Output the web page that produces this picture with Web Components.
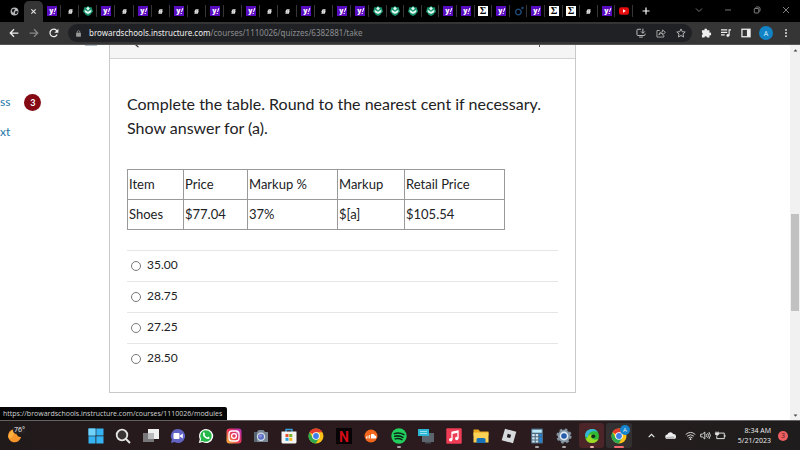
<!DOCTYPE html>
<html lang="en">
<head>
<meta charset="utf-8">
<title>Quiz</title>
<style>
  html, body {
    height: 100%;
    margin: 0;
  }
  body {
    font-family: "Open Sans", "Noto Sans", sans-serif;
    overflow: hidden;
  }
</style>
</head>
<body>
<browser-window>
  <tab-strip slot="tabs"></tab-strip>
  <address-bar slot="toolbar" host="browardschools.instructure.com" path="/courses/1110026/quizzes/6382881/take"></address-bar>
  <course-nav slot="nav"></course-nav>
  <quiz-question slot="content">
    <span slot="prompt">Complete the table. Round to the nearest cent if necessary. Show answer for (a).</span>
    <price-table slot="table"></price-table>
    <answer-option slot="answers" value="35.00"></answer-option>
    <answer-option slot="answers" value="28.75"></answer-option>
    <answer-option slot="answers" value="27.25"></answer-option>
    <answer-option slot="answers" value="28.50"></answer-option>
  </quiz-question>
  <span slot="status">https://browardschools.instructure.com/courses/1110026/modules</span>
  <task-bar slot="taskbar"></task-bar>
</browser-window>

<script>
const chrome = `
  <circle cx="8" cy="8" r="7.5" fill="#fbc116"/>
  <path d="M8 8 1.5 4.2A7.5 7.5 0 0 1 14.5 4.2H8z" fill="#e33b2e"/>
  <path d="M1.5 4.2A7.5 7.5 0 0 0 7.6 15.5L11.3 9.9 8 8 4.7 9.9z" fill="#2da94f"/>
  <circle cx="8" cy="8" r="3.8" fill="#fff"/>
  <circle cx="8" cy="8" r="2.9" fill="#3f7de8"/>`;

// every icon is drawn on a 16 x 16 grid
const icons = {
  globe: `<circle cx="8" cy="8" r="7" fill="#b5b8bb"/><path d="M3 5l4-2 2 2-2 2-1 3-2-1zM9 8l4-1 1 2-3 4-2-1z" fill="#111"/>`,
  close: `<path d="M3 3l10 10M13 3L3 13" stroke="currentColor" stroke-width="2.4"/>`,
  yahoo: `<rect width="16" height="16" fill="#5a0cc0"/><text x="7" y="11" fill="#fff" font-family="Open Sans, sans-serif" font-size="11" font-weight="800" text-anchor="middle">y</text><path d="M11.2 9.5l1.8-6h2l-2.2 6zM10.5 11h2v1.6h-2z" fill="#fff"/>`,
  mark: `<path d="M6 3h7l-1 4h1l-2 6H3l1-4H3l1-3z" fill="#e0e0e0"/><path d="M7.500 6h2M6.500 9.500h2" stroke="#444" stroke-width="1"/>`,
  leaf: `<path d="M8 0l3 2h3l1 4 1 3-3 3-1 2-4 2-4-2-1-2-3-3 1-3 1-4h3z" fill="#15916e"/><path d="M8 1l3 3-3 3-3-3zM2.500 6L7 8.500l1 1 1-1L13.500 6l-.5 4-4 2.500H7L3 10z" fill="#e2f8ef"/>`,
  sigma: `<rect width="16" height="16" fill="#fff"/><text x="8" y="13.500" fill="#000" font-family="Liberation Serif, serif" font-size="16" font-weight="700" text-anchor="middle">Σ</text>`,
  ring: `<circle cx="7" cy="9.500" r="4.500" fill="none" stroke="#1d4673" stroke-width="2.400"/><circle cx="13.500" cy="3" r="2" fill="#1d4673"/>`,
  youtube: `<rect y="2" width="16" height="12" rx="3.500" fill="#e60c0c"/><path d="M6.500 5.200L11 8l-4.500 2.800z" fill="#fff"/>`,
  plus: `<path d="M8 1v14M1 8h14" stroke="currentColor" stroke-width="2.400"/>`,
  down: `<path d="M2 5l6 6 6-6" fill="none" stroke="currentColor" stroke-width="1.400"/>`,
  up: `<path d="M3 11l5-5 5 5" fill="none" stroke="currentColor" stroke-width="2"/>`,
  minimize: `<path d="M2 8h12" stroke="currentColor" stroke-width="1.400"/>`,
  restore: `<rect x="2.500" y="5" width="9" height="9" rx="1.500" fill="none" stroke="currentColor" stroke-width="1.500"/><path d="M5 3q1-1 2-1h4q3 0 3 3v4q0 1-1 2" fill="none" stroke="currentColor" stroke-width="1.500"/>`,
  exit: `<path d="M2 2l12 12M14 2L2 14" stroke="currentColor" stroke-width="1.500"/>`,
  back: `<path d="M15 8H2M8 2L2 8l6 6" fill="none" stroke="currentColor" stroke-width="2"/>`,
  forward: `<path d="M1 8h13M8 2l6 6-6 6" fill="none" stroke="currentColor" stroke-width="2"/>`,
  reload: `<path d="M13 10.500A6 6 0 1 1 12 3.800L14 6" fill="none" stroke="currentColor" stroke-width="2"/><path d="M15 1v6.500H8.500z" fill="currentColor"/>`,
  lock: `<rect x="2.500" y="6.500" width="11" height="9" rx="1" fill="currentColor"/><path d="M5 7V4.500a3 3 0 0 1 6 0V7" fill="none" stroke="currentColor" stroke-width="1.700"/>`,
  install: `<path d="M8 2H3Q1.500 2 1.500 3.500v7Q1.500 12 3 12h10q1.500 0 1.500-1.500V9M5 14.500h6M11 1v7M8 5.500l3 3 3-3" fill="none" stroke="currentColor" stroke-width="1.600"/>`,
  share: `<path d="M6 4H1.500v10.500h11V11M4.500 11q.5-5 6-5V3L15 7l-4.500 4V8.500q-4 0-6 2.500z" fill="none" stroke="currentColor" stroke-width="1.300"/>`,
  star: `<path d="M8 1.500l2 4.400 4.700.5-3.500 3.200 1 4.800L8 12l-4.200 2.400 1-4.800L1.300 6.400 6 5.900z" fill="none" stroke="currentColor" stroke-width="1.500"/>`,
  puzzle: `<path d="M1.500 3.500h4a2.200 2.200 0 1 1 4.200 0h3.800v4a2.200 2.200 0 1 1 0 4.200V15h-4a2 2 0 0 0-4 0h-4v-4a2.200 2.200 0 0 0 0-4z" fill="currentColor"/>`,
  queue: `<path d="M0 3h10M0 7h10M0 11h6M13 12V3h3" fill="none" stroke="currentColor" stroke-width="1.800"/><circle cx="11" cy="12" r="2.300" fill="currentColor"/>`,
  panel: `<rect x="1.500" y="2" width="13" height="12" fill="none" stroke="currentColor" stroke-width="2"/><path d="M9.500 2h5v12h-5z" fill="currentColor"/>`,
  more: `<circle cx="8" cy="3" r="1.500" fill="currentColor"/><circle cx="8" cy="8" r="1.500" fill="currentColor"/><circle cx="8" cy="13" r="1.500" fill="currentColor"/>`,
  arrowUp: `<path d="M2 11l6-7 6 7z" fill="currentColor"/>`,
  arrowDown: `<path d="M2 5l6 7 6-7z" fill="currentColor"/>`,
  windows: `<path d="M.5.500h7v7h-7zM8.300.500h7.200v7H8.300zM.5 8.300h7v7.200h-7zM8.300 8.300h7.200v7.200H8.300z" fill="#35b3f2"/><path d="M.5.500h7v7h-7z" fill="#72d3fa"/>`,
  search: `<circle cx="7" cy="7" r="5.300" fill="#3b3435" stroke="#e5e5e5" stroke-width="1.800"/><path d="M11 11l4 4" stroke="#e5e5e5" stroke-width="2"/>`,
  taskview: `<rect x="5" y="1" width="11" height="10" fill="#f0f0f0"/><rect x="0" y="5" width="11" height="9" fill="#77777a"/><rect x="5" y="5" width="6" height="6" fill="#b9b9bb"/>`,
  chat: `<path d="M8 1a7 7 0 1 1-3.500 13L1 15l.8-3.500A7 7 0 0 1 8 1z" fill="#6264c4"/><rect x="3.500" y="5" width="6" height="6" rx="1" fill="#fff"/><path d="M10 7.500l2.800-2v5L10 8.500z" fill="#fff"/>`,
  whatsapp: `<path d="M8 1a7 7 0 1 1-3.400 13L.8 15l1-3.800A7 7 0 0 1 8 1z" fill="#fff"/><path d="M8 2.200a5.800 5.800 0 1 1-3.200 10.700l-2.400.7.700-2.400A5.800 5.800 0 0 1 8 2.200z" fill="#26b94a"/><path d="M5 5q1-1.500 1.800.3.500 1-.3 1.500 1 2 2.800 2.600.7-1.200 1.600-.5 1.500.8.300 1.800-1.400 1-4-.7Q4.300 7.500 5 5z" fill="#fff"/>`,
  instagram: `<defs><linearGradient id="g" x1="0" y1="1" x2="1" y2="0"><stop stop-color="#fdc13c"/><stop offset=".5" stop-color="#ea3458"/><stop offset="1" stop-color="#b52bc0"/></linearGradient></defs><rect x=".5" y=".5" width="15" height="15" rx="3" fill="url(#g)"/><rect x="3" y="3" width="10" height="10" rx="3" fill="none" stroke="#fff" stroke-width="1.300"/><circle cx="8" cy="8" r="2.400" fill="none" stroke="#fff" stroke-width="1.300"/><circle cx="11" cy="5" r=".7" fill="#fff"/>`,
  camera: `<path d="M1 4h3l1.500-2h5L12 4h3v10H1z" fill="#7b8794"/><path d="M1 4h3v10H1z" fill="#586673"/><circle cx="8" cy="8.700" r="4.200" fill="#d9dfe8"/><circle cx="8" cy="8.700" r="3" fill="#5873c4"/><circle cx="7.500" cy="8" r="1.400" fill="#9c8ce0"/>`,
  store: `<path d="M5 4V1.500h6V4" fill="none" stroke="#38a5df" stroke-width="1.300"/><path d="M.5 3.500h15V14q0 1.500-1.500 1.500H2Q.5 15.500.5 14z" fill="#f4f4f4"/><path d="M4.500 6h3v3h-3z" fill="#e8532e"/><path d="M8.300 6h3v3h-3z" fill="#75b62b"/><path d="M4.500 9.800h3v3h-3z" fill="#29a0df"/><path d="M8.300 9.800h3v3h-3z" fill="#f5b51b"/>`,
  chrome,
  netflix: `<rect width="16" height="16" fill="#050303"/><text x="8" y="13.500" fill="#d40d17" font-family="Roboto, sans-serif" font-size="14" font-weight="700" text-anchor="middle">N</text>`,
  soundcloud: `<circle cx="8" cy="8" r="6.500" fill="#f2661c"/><path d="M8 10.500V6.300q3-1.600 3.800 1.200 1.700 0 1.600 1.500 0 1.500-1.500 1.500z" fill="#fff"/><path d="M3.500 8.500v2M5 7.500v3M6.600 7v3.500" stroke="#fff" stroke-width=".9"/>`,
  spotify: `<circle cx="8" cy="8" r="7.700" fill="#22cf5e"/><path d="M3.300 5.600q5-1.400 9.600 1M3.700 8.300q4.300-1.200 8.300 1M4.200 10.900q3.500-1 6.800.8" fill="none" stroke="#0b2414" stroke-width="1.500" stroke-linecap="round"/>`,
  remote: `<rect x="4" y="5" width="12" height="9" fill="#5c646e"/><path d="M7 14h6v1.500H7z" fill="#454b53"/><rect x="0" y="1" width="11" height="7" fill="#2db6d3"/><path d="M2 3.500h7M2 5.500h7" stroke="#b4edf7" stroke-width=".8"/>`,
  music: `<rect x=".3" y=".3" width="15.400" height="15.400" rx="1" fill="#ef3d56"/><path d="M6 11.500V4.200L12 3v7.200" fill="none" stroke="#fff" stroke-width="1.300"/><path d="M6 4l6-1.200v2L6 6z" fill="#fff"/><circle cx="4.700" cy="11.700" r="1.700" fill="#fff"/><circle cx="10.700" cy="10.500" r="1.700" fill="#fff"/>`,
  folder: `<path d="M.5 1.500h5l1.500 2h8.500v4H.5z" fill="#e9a71d"/><path d="M.5 4.500h15v10H.5z" fill="#fbd255"/><path d="M3.500 15v-3.500q0-1.500 1.500-1.500h6q1.500 0 1.500 1.500V15z" fill="#1771b8"/>`,
  roblox: `<path d="M4 .8l11.300 3L12 15.200l-11.300-3z" fill="#d7dadd"/><path d="M6.700 5.800l3.400.9-.9 3.400-3.400-.9z" fill="#1e1a1b"/>`,
  calculator: `<rect x="2" y=".5" width="12" height="15" rx="1" fill="#4a6880"/><rect x="3.200" y="1.700" width="9.600" height="3" fill="#bfe8f8"/><path d="M3.200 6h2.500v2.300H3.200zM6.700 6h2.500v2.300H6.700zM3.200 9.300h2.500v2.300H3.200zM6.700 9.300h2.500v2.300H6.700zM3.200 12.500h2.500v2H3.200zM6.700 12.500h2.500v2H6.700z" fill="#d5e3ee"/><path d="M10.300 6h2.500v2.300h-2.500zM10.300 9.300h2.500v5.200h-2.500z" fill="#2284d8"/>`,
  gear: `<circle cx="8" cy="8" r="6.300" fill="#8494a3" stroke="#8494a3" stroke-width="2.600" stroke-dasharray="2.500 2.450"/><circle cx="8" cy="8" r="4.400" fill="#e3ebf2"/><circle cx="8" cy="8" r="2.800" fill="#245caa"/>`,
  edge: `<circle cx="8" cy="8" r="7" fill="#31b936"/><path d="M1 8a7 7 0 0 1 13-3.500Q10 1.500 6 4.500 3.500 7 4 10z" fill="#36b5dc"/><path d="M2 11q1 4 6 4 4.500 0 6.500-4.300-4 2-6.500-.2Q6 8.500 9 6.800 4.500 5.500 3.500 9.500z" fill="#9ddb25"/><path d="M7.200 8.500q0-2 2-2t2.300 2q-1 1.700-2.500 1.600t-1.800-1.600z" fill="#142b1a"/>`,
  cloud: `<path d="M3.500 13a3.200 3.200 0 0 1 0-6.400A4.500 4.500 0 0 1 12 6a3.500 3.500 0 0 1 1 7z" fill="#eee"/><path d="M3 13q-2-1-1-3l11-1q2 2 .5 4z" fill="#bdbdbf"/>`,
  wifi: `<path d="M1 6.500q7-6 14 0M3 9q5-4.200 10 0M5.200 11.400q2.800-2.300 5.600 0" fill="none" stroke="#e5e5e5" stroke-width="1.300"/><circle cx="8" cy="13.300" r="1.300" fill="#e5e5e5"/>`,
  sound: `<path d="M1 6h2.500L7 3v10L3.500 10H1zM9 6q1.600 2 0 4M11 4.500q3 3.500 0 7M13 3q4.300 5 0 10" fill="none" stroke="#e5e5e5" stroke-width="1.300"/>`,
  battery: `<path d="M5 4.500h8.500v8h-11V9M14.500 7v3" fill="none" stroke="#e5e5e5" stroke-width="1.400"/><path d="M1.500 2v2M4.500 2v2M.5 4h5v2.500L3 8 .5 6.500z" fill="#e5e5e5" stroke="#e5e5e5"/>`,
  moon: `<path d="M10 1.500A7 7 0 1 0 15 9.500Q9 10 10 1.500z" fill="#f7942a"/><path d="M8 2.500A6.500 6.500 0 0 0 2 11Q7 12 8 2.500z" fill="#fbb040"/>`
};

class UiIcon extends HTMLElement {
  constructor() {
    super();
    this.attachShadow({ mode: "open" });
  }

  connectedCallback() {
    this.shadowRoot.innerHTML = `
      <style>
        :host { display: block; flex: none; width: var(--icon-size, 16px); height: var(--icon-size, 16px); }
        svg { display: block; width: 100%; height: 100%; overflow: visible; }
      </style>
      <svg viewBox="0 0 16 16" aria-hidden="true">${icons[this.getAttribute("name")]}</svg>
    `;
  }
}

class BrowserWindow extends HTMLElement {
  constructor() {
    super();
    this.attachShadow({ mode: "open" });
    this.shadowRoot.innerHTML = `
      <style>
        :host {
          display: flex;
          flex-direction: column;
          height: 100vh;
          background: #fff;
        }
        .view {
          position: relative;
          flex: 1;
          min-height: 0;
          display: grid;
          grid-template-columns: 109px minmax(0, 467fr) 214fr 10px;
          overflow: hidden;
        }
        scroll-track { grid-column: 4; }
        .status {
          position: absolute;
          left: 0;
          bottom: 0;
          padding: 0 5px 0 3px;
          border-radius: 0 2px 0 0;
          background: #050505;
          color: #d2d2d2;
          font-size: 7px;
          line-height: 13px;
        }
      </style>
      <slot name="tabs"></slot>
      <slot name="toolbar"></slot>
      <div class="view">
        <slot name="nav"></slot>
        <slot name="content"></slot>
        <scroll-track></scroll-track>
        <div class="status"><slot name="status"></slot></div>
      </div>
      <slot name="taskbar"></slot>
    `;
  }
}

class ScrollTrack extends HTMLElement {
  constructor() {
    super();
    this.attachShadow({ mode: "open" });
    this.shadowRoot.innerHTML = `
      <style>
        :host {
          --icon-size: 5px;
          display: grid;
          grid-template-rows: 10px 159fr 97fr 99fr 10px;
          justify-items: center;
          align-items: center;
          background: #f1f1f1;
          color: #444;
        }
        .thumb { grid-row: 3; width: 8px; height: 100%; background: #c1c1c1; }
        .end { grid-row: 5; }
      </style>
      <ui-icon name="arrowUp"></ui-icon>
      <div class="thumb"></div>
      <ui-icon class="end" name="arrowDown"></ui-icon>
    `;
  }
}

class TabStrip extends HTMLElement {
  constructor() {
    super();
    this.attachShadow({ mode: "open" });
    const y = "yahoo", m = "mark", l = "leaf", s = "sigma";
    const groups = [
      ["globe", "close"],
      [y, m, l, y, m, y, m, y, m, y, m, y, m, m, y, m, y, y],
      [l, l, l, l, y, y, s, y, "ring", y, s, s, m, y, "youtube"]
    ];
    const tab = name => `<button class="tab ${name}" role="tab" aria-label="${name}"><ui-icon name="${name}"></ui-icon></button>`;
    this.shadowRoot.innerHTML = `
      <style>
        :host {
          --icon-size: 10px;
          display: flex;
          height: 22px;
          padding-left: 5px;
          background: #000;
          color: #e8e8e8;
        }
        .group { display: flex; flex: 38 1 0; min-width: 0; }
        .group:nth-of-type(2) { flex-grow: 326; }
        .group:nth-of-type(3) { flex-grow: 264; }
        button {
          display: flex;
          align-items: center;
          justify-content: center;
          padding: 0;
          border: 0;
          background: none;
          color: inherit;
        }
        .tab {
          flex: 1 1 0;
          min-width: 0;
          background: linear-gradient(#363636, #363636) right center / 1px 12px no-repeat;
        }
        .globe { --icon-size: 9px; background: none; }
        .mark { --icon-size: 7px; }
        .close {
          --icon-size: 7px;
          margin-top: 1px;
          padding-bottom: 1px;
          border-radius: 5px 5px 0 0;
          background: #353535;
        }
        .controls {
          flex: 167 1 0;
          display: grid;
          grid-template-columns: 26fr 26fr repeat(4, 29fr);
          --icon-size: 8px;
          color: #aaa;
        }
        .new { color: #fff; }
        .caption { padding-bottom: 3px; }
      </style>
      ${groups.map(g => `<div class="group">${g.map(tab).join("")}</div>`).join("")}
      <div class="controls">
        <button class="new" aria-label="New tab"><ui-icon name="plus"></ui-icon></button>
        <span></span>
        <button class="caption" aria-label="Search tabs"><ui-icon name="down"></ui-icon></button>
        <button class="caption" aria-label="Minimize"><ui-icon name="minimize"></ui-icon></button>
        <button class="caption" aria-label="Restore"><ui-icon name="restore"></ui-icon></button>
        <button class="caption" aria-label="Close"><ui-icon name="exit"></ui-icon></button>
      </div>
    `;
  }
}

class AddressBar extends HTMLElement {
  constructor() {
    super();
    this.attachShadow({ mode: "open" });
  }

  connectedCallback() {
    this.shadowRoot.innerHTML = `
      <style>
        :host {
          --icon-size: 10px;
          display: flex;
          align-items: center;
          height: 22px;
          border-bottom: 1px solid #555;
          background: #353535;
          color: #eee;
        }
        button {
          display: flex;
          align-items: center;
          justify-content: center;
          width: 20px;
          height: 18px;
          padding: 0;
          border: 0;
          background: none;
          color: inherit;
        }
        .nav { display: flex; padding: 0 4px; }
        .dim { color: #888; }
        .omnibox {
          flex: 1;
          display: flex;
          align-items: center;
          height: 18px;
          padding: 0 1px 0 7px;
          border-radius: 9px;
          background: #202124;
          color: #bbb;
        }
        .lock { --icon-size: 7px; color: #999; }
        .url {
          flex: 1;
          margin-left: 7px;
          color: #8c8e91;
          font-family: "Noto Sans", sans-serif;
          font-size: 8px;
          line-height: 16px;
          white-space: nowrap;
        }
        .url span { color: #eee; }
        .tools { display: flex; align-items: center; padding: 0 4px; }
        .avatar {
          width: 14px;
          height: 14px;
          margin: 0 3px;
          border-radius: 50%;
          background: #1283c5;
          color: #d9efff;
          font: 7px "Open Sans", sans-serif;
        }
      </style>
      <div class="nav">
        <button aria-label="Back"><ui-icon name="back"></ui-icon></button>
        <button class="dim" aria-label="Forward"><ui-icon name="forward"></ui-icon></button>
        <button aria-label="Reload"><ui-icon name="reload"></ui-icon></button>
      </div>
      <div class="omnibox">
        <ui-icon class="lock" name="lock"></ui-icon>
        <div class="url" role="textbox" contenteditable="true" spellcheck="false" aria-label="Address"><span>${this.getAttribute("host")}</span>${this.getAttribute("path")}</div>
        <button aria-label="Install"><ui-icon name="install"></ui-icon></button>
        <button aria-label="Share"><ui-icon name="share"></ui-icon></button>
        <button aria-label="Bookmark"><ui-icon name="star"></ui-icon></button>
      </div>
      <div class="tools">
        <button aria-label="Extensions"><ui-icon name="puzzle"></ui-icon></button>
        <button aria-label="Media"><ui-icon name="queue"></ui-icon></button>
        <button aria-label="Side panel"><ui-icon name="panel"></ui-icon></button>
        <button class="avatar" aria-label="Profile A">A</button>
        <button aria-label="Menu"><ui-icon name="more"></ui-icon></button>
      </div>
    `;
  }
}

class CourseNav extends HTMLElement {
  constructor() {
    super();
    this.attachShadow({ mode: "open" });
    this.shadowRoot.innerHTML = `
      <style>
        :host {
          display: block;
          font-family: Lato, sans-serif;
          font-size: 12px;
          line-height: 18px;
        }
        .edge { width: 12px; height: 1px; margin-left: 85px; background: #b4c0ca; }
        nav { display: grid; gap: 12px; padding-top: 47px; }
        a {
          display: flex;
          align-items: center;
          gap: 14px;
          color: #2276a8;
          text-decoration: none;
        }
        .badge {
          width: 17px;
          height: 17px;
          border-radius: 50%;
          background: #850a14;
          color: #fff;
          font-size: 9px;
          font-weight: 700;
          line-height: 17px;
          text-align: center;
        }
      </style>
      <div class="edge"></div>
      <nav>
        <a href="#ss">ss <span class="badge">3</span></a>
        <a href="#xt">xt</a>
      </nav>
    `;
  }
}

class QuizQuestion extends HTMLElement {
  constructor() {
    super();
    this.attachShadow({ mode: "open" });
    this.shadowRoot.innerHTML = `
      <style>
        :host {
          display: block;
          align-self: start;
          border: 1px solid #c7c9cb;
          border-top: 0;
          color: #222224;
          font-family: Lato, sans-serif;
        }
        header {
          display: flex;
          justify-content: space-between;
          height: 13px;
          padding: 0 32px 0 25px;
          border-bottom: 1px solid #d0d2d4;
          background: #f5f5f5;
        }
        header svg { width: 4px; height: 3px; }
        .body { padding: 33px 17px 18px; }
        p { margin: 0 0 29px; font-size: 16px; line-height: 24px; }
        fieldset {
          display: grid;
          margin: 20px 0 0;
          padding: 0;
          border: 0;
        }
      </style>
      <header>
        <svg viewBox="0 0 4 3" aria-hidden="true"><path d="M0 0h2l2 2-1 .6z" fill="#333"/></svg>
        <svg viewBox="0 0 4 3" aria-hidden="true"><path d="M0 0h1v2H0z" fill="#555"/></svg>
      </header>
      <div class="body">
        <p><slot name="prompt"></slot></p>
        <slot name="table"></slot>
        <fieldset aria-label="Answers"><slot name="answers"></slot></fieldset>
      </div>
    `;
    this.addEventListener("answer-change", (event) => {
      this.querySelectorAll("answer-option").forEach((option) => {
        if (option !== event.target) option.clear();
      });
    });
  }
}

class PriceTable extends HTMLElement {
  constructor() {
    super();
    this.attachShadow({ mode: "open" });
    this.shadowRoot.innerHTML = `
      <style>
        :host { display: block; }
        table {
          border-collapse: collapse;
          font-size: 13px;
          line-height: 18px;
        }
        th, td {
          padding: 5px 1px 6px;
          border: 1px solid #999;
          font-weight: 400;
          text-align: left;
          white-space: nowrap;
        }
      </style>
      <table>
        <colgroup>
          <col style="width: 56px"><col style="width: 64px"><col style="width: 90px"><col style="width: 67px"><col style="width: 100px">
        </colgroup>
        <thead>
          <tr><th>Item</th><th>Price</th><th>Markup %</th><th>Markup</th><th>Retail Price</th></tr>
        </thead>
        <tbody>
          <tr><td>Shoes</td><td>$77.04</td><td>37%</td><td>$[a]</td><td>$105.54</td></tr>
        </tbody>
      </table>
    `;
  }
}

class AnswerOption extends HTMLElement {
  constructor() {
    super();
    this.attachShadow({ mode: "open" });
  }

  connectedCallback() {
    const value = this.getAttribute("value");
    this.shadowRoot.innerHTML = `
      <style>
        :host { display: block; border-top: 1px solid #e6e6e6; }
        label {
          display: flex;
          align-items: center;
          gap: 6px;
          padding: 5px 4px 7px;
          font-size: 12px;
          line-height: 18px;
        }
        input {
          appearance: none;
          width: 10px;
          height: 10px;
          margin: 1px 0 0;
          border: 1px solid #777;
          border-radius: 50%;
          background: #fff;
        }
        input:checked { background: #2276a8; box-shadow: inset 0 0 0 2px #fff; }
      </style>
      <label><input type="radio" name="answer" value="${value}">${value}</label>
    `;
    this.input = this.shadowRoot.querySelector("input");
    this.input.addEventListener("change", () => {
      this.dispatchEvent(new CustomEvent("answer-change", { bubbles: true }));
    });
  }

  clear() {
    this.input.checked = false;
  }
}

class TaskBar extends HTMLElement {
  constructor() {
    super();
    this.attachShadow({ mode: "open" });
    const apps = ["windows", "search", "taskview", "chat", "whatsapp", "instagram", "camera", "store", "chrome", "netflix",
      "soundcloud", "spotify", "remote", "music", "folder", "roblox", "calculator", "gear", "edge", "chrome"];
    const running = { 11: "run", 16: "run", 17: "run", 18: "run alert", 19: "run active" };
    const app = (name, i) => `
      <button class="app ${running[i] || ""}" aria-label="${name}">
        <ui-icon name="${name}"></ui-icon>
        ${i === 19 ? `<span class="user">A</span>` : ""}
      </button>`;
    this.shadowRoot.innerHTML = `
      <style>
        :host {
          display: grid;
          grid-template-columns: 82fr 551fr 167fr;
          height: 29px;
          border-top: 1px solid #656062;
          background: linear-gradient(90deg, #201a1b, #291a1d 25%, #2c1b1e 65%, #241d1e 80%, #1e1c1c);
          color: #eee;
        }
        button {
          display: flex;
          align-items: center;
          justify-content: center;
          padding: 0;
          border: 0;
          background: none;
          color: inherit;
          font: inherit;
        }
        .weather { position: relative; justify-self: start; padding-left: 7px; --icon-size: 15px; }
        .weather span {
          position: absolute;
          left: 13px;
          top: 5px;
          padding: 0 1px;
          border-radius: 4px;
          background: #252023;
          font-size: 7px;
          line-height: 8px;
        }
        .apps { display: grid; grid-template-columns: repeat(20, minmax(0, 1fr)); --icon-size: 16px; }
        .app { position: relative; margin: 2px 1px; border-radius: 3px; }
        .run::after {
          content: "";
          position: absolute;
          bottom: 0;
          width: 4px;
          height: 2px;
          border-radius: 1px;
          background: #aaa5a6;
        }
        .alert { background: #4c2528; }
        .alert::after { background: #efb0ae; }
        .active { background: #333031; }
        .active::after { width: 10px; background: #f36b6e; }
        .user {
          position: absolute;
          top: 2px;
          right: 2px;
          width: 10px;
          height: 10px;
          border-radius: 50%;
          background: #1485ce;
          font-size: 6px;
          line-height: 10px;
        }
        .tray { display: flex; align-items: center; justify-content: flex-end; padding-right: 12px; --icon-size: 11px; }
        .up { --icon-size: 9px; margin-right: 9px; }
        .cloud { margin-right: 9px; }
        .wifi, .sound { margin-right: 4px; }
        .clock { width: 45px; font-size: 7px; line-height: 10px; text-align: right; }
        .count {
          width: 10px;
          height: 10px;
          margin-left: 7px;
          border-radius: 50%;
          background: #ef5f62;
          color: #45191b;
          font-size: 7px;
          line-height: 10px;
        }
      </style>
      <button class="weather" aria-label="Weather"><ui-icon name="moon"></ui-icon><span>76°</span></button>
      <div class="apps">${apps.map(app).join("")}</div>
      <div class="tray">
        <button class="up" aria-label="Hidden icons"><ui-icon name="up"></ui-icon></button>
        <button class="cloud" aria-label="Cloud"><ui-icon name="cloud"></ui-icon></button>
        <button class="wifi" aria-label="Network"><ui-icon name="wifi"></ui-icon></button>
        <button class="sound" aria-label="Volume"><ui-icon name="sound"></ui-icon></button>
        <button aria-label="Battery"><ui-icon name="battery"></ui-icon></button>
        <div class="clock"><div>8:34 AM</div><div>5/21/2023</div></div>
        <button class="count" aria-label="Notifications 3">3</button>
      </div>
    `;
  }
}

customElements.define("ui-icon", UiIcon);
customElements.define("scroll-track", ScrollTrack);
customElements.define("tab-strip", TabStrip);
customElements.define("address-bar", AddressBar);
customElements.define("course-nav", CourseNav);
customElements.define("price-table", PriceTable);
customElements.define("answer-option", AnswerOption);
customElements.define("quiz-question", QuizQuestion);
customElements.define("task-bar", TaskBar);
customElements.define("browser-window", BrowserWindow);
</script>
</body>
</html>
